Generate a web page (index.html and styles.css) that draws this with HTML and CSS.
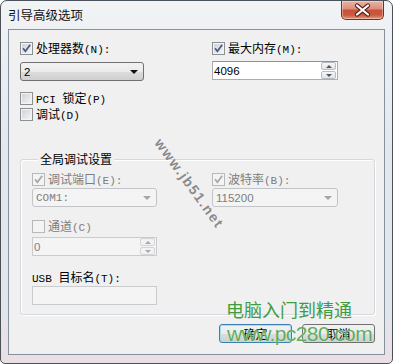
FILE: index.html
```html
<!DOCTYPE html>
<html>
<head>
<meta charset="utf-8">
<link rel="stylesheet" href="styles.css">
</head>
<body>
<div class="window">
  <div class="titlebar">
    <span class="title">引导高级选项</span>
    <div class="close">
      <svg width="41" height="18" viewBox="0 0 41 18">
        <path d="M15 4.5 L26 13.5 M26 4.5 L15 13.5" stroke="#5b1f17" stroke-width="4.2" stroke-linecap="round" fill="none"/>
        <path d="M15 4.5 L26 13.5 M26 4.5 L15 13.5" stroke="#ffffff" stroke-width="2.2" stroke-linecap="round" fill="none"/>
      </svg>
    </div>
  </div>
  <div class="client">
    <div class="top-grid">
      <div class="col">
        <label class="cb"><span class="box"><svg width="11" height="11" viewBox="0 0 11 11"><path d="M2 5.2 L4.4 8.2 L9.2 1.8" stroke="#4b5d82" stroke-width="1.8" fill="none"/></svg></span><span>处理器数<span class="l">(N):</span></span></label>
        <div class="combo combo-top"><span class="val">2</span><span class="arrow"></span></div>
        <label class="cb cb-pci"><span class="box"></span><span><span class="l">PCI </span>锁定<span class="l">(P)</span></span></label>
        <label class="cb cb-debug"><span class="box"></span><span>调试<span class="l">(D)</span></span></label>
      </div>
      <div class="col">
        <label class="cb"><span class="box"><svg width="11" height="11" viewBox="0 0 11 11"><path d="M2 5.2 L4.4 8.2 L9.2 1.8" stroke="#4b5d82" stroke-width="1.8" fill="none"/></svg></span><span>最大内存<span class="l">(M):</span></span></label>
        <div class="spin spin-top"><span class="val">4096</span><span class="spinbtns"><span class="sb"><span class="up"></span></span><span class="sb"><span class="down"></span></span></span></div>
      </div>
    </div>

    <div class="group">
      <div class="group-title">全局调试设置</div>
      <div class="ggrid">
        <div class="col">
          <label class="cb dis"><span class="box"><svg width="11" height="11" viewBox="0 0 11 11"><path d="M2 5.2 L4.4 8.2 L9.2 1.8" stroke="#a8a8a8" stroke-width="1.8" fill="none"/></svg></span><span>调试端口<span class="l">(E):</span></span></label>
          <div class="combo dcombo"><span class="val mono">COM1:</span><span class="arrow"></span></div>
          <label class="cb dis cb-chan"><span class="box"></span><span>通道<span class="l">(C)</span></span></label>
          <div class="spin dspin"><span class="val">0</span><span class="spinbtns"><span class="sb"><span class="up"></span></span><span class="sb"><span class="down"></span></span></span></div>
          <div class="lbl"><span class="l">USB </span>目标名<span class="l">(T):</span></div>
          <div class="edit"></div>
        </div>
        <div class="col">
          <label class="cb dis"><span class="box"><svg width="11" height="11" viewBox="0 0 11 11"><path d="M2 5.2 L4.4 8.2 L9.2 1.8" stroke="#a8a8a8" stroke-width="1.8" fill="none"/></svg></span><span>波特率<span class="l">(B):</span></span></label>
          <div class="combo dcombo wide"><span class="val">115200</span><span class="arrow"></span></div>
        </div>
      </div>
    </div>

    <div class="buttons">
      <div class="btn default">确定</div>
      <div class="btn">取消</div>
    </div>
  </div>

  <span class="wm-jb">www.jb51.net</span>
  <span class="wm-cn">电脑入门到精通</span>
  <span class="wm-url">www.pc280.com</span>
</div>
</body>
</html>
```
FILE: styles.css
```css
* { box-sizing: border-box; }

body {
  margin: 0;
  width: 393px;
  height: 364px;
  overflow: hidden;
  background: #ffffff;
  font-family: "Noto Sans CJK SC", sans-serif;
  font-size: 12px;
  color: #000;
}

.l {
  font-family: "Liberation Mono", monospace;
  font-size: 11px;
}

.window {
  position: relative;
  width: 393px;
  height: 364px;
  border: 1px solid #4b5158;
  border-radius: 7px 7px 5px 5px;
  background: linear-gradient(#f1f3f5 0%, #e4e8ed 40%, #e2e6eb 85%, #eadfe4 100%);
  display: flex;
  flex-direction: column;
  overflow: hidden;
}

.titlebar {
  height: 28px;
  display: flex;
  justify-content: space-between;
  align-items: flex-start;
}

.title {
  font-family: "Noto Sans CJK SC", sans-serif;
  font-size: 12.5px;
  line-height: 14px;
  margin: 7px 0 0 7px;
  color: #111;
}

.close {
  width: 43px;
  height: 19px;
  margin-right: 8px;
  border: 1px solid #7a2c22;
  border-top: none;
  border-radius: 0 0 5px 5px;
  background: linear-gradient(#eab3a5 0%, #dd8f7d 42%, #c9503a 52%, #c95a40 78%, #e29a7c 100%);
  box-shadow: inset 0 0 0 1px rgba(255, 255, 255, 0.35);
  display: flex;
  align-items: center;
  justify-content: center;
}

.client {
  margin: 0 7px;
  height: 326px;
  border: 1px solid #85919d;
  background: #f0f0f0;
  padding: 12px 9px 0 11px;
}

.top-grid {
  display: grid;
  grid-template-columns: 192px 1fr;
}

.col {
  display: flex;
  flex-direction: column;
  align-items: flex-start;
}

.cb {
  display: flex;
  align-items: center;
  gap: 3px;
  height: 13px;
  line-height: 13px;
  white-space: nowrap;
}

.box {
  width: 13px;
  height: 13px;
  flex: none;
  border: 1px solid #8e8f8f;
  background: linear-gradient(135deg, #cdd1d6 0%, #f6f7f8 100%);
  box-shadow: inset 0 0 0 1px #f4f4f4;
  display: flex;
}

.cb.dis { color: #7d7d7d; }
.cb.dis .box {
  border-color: #b8b8b8;
  background: #f4f4f4;
  box-shadow: none;
}

.cb-pci { margin-top: 11px; }
.cb-debug { margin-top: 3px; }

.combo {
  height: 19px;
  border: 1px solid #707070;
  border-radius: 3px;
  background: linear-gradient(#f2f2f2 0%, #ebebeb 50%, #dddddd 51%, #cfcfcf 100%);
  display: flex;
  align-items: center;
  justify-content: space-between;
  padding: 0 5px 0 3px;
}

.combo .val, .spin .val {
  font-family: "Liberation Sans", sans-serif;
  font-size: 11.5px;
}

.combo .val.mono {
  font-family: "Liberation Mono", monospace;
  font-size: 11px;
}

.arrow {
  width: 0;
  height: 0;
  border-left: 4px solid transparent;
  border-right: 4px solid transparent;
  border-top: 4px solid #111;
}

.combo-top {
  width: 124px;
  margin-top: 7px;
}

.spin {
  height: 19px;
  border: 1px solid #abadb3;
  border-top-color: #8f949c;
  background: #fff;
  display: flex;
  align-items: center;
  padding-left: 1px;
}

.spin .val { flex: 1; }

.spin-top {
  width: 126px;
  margin-top: 6px;
}

.spinbtns {
  width: 16px;
  height: 17px;
  display: flex;
  flex-direction: column;
  gap: 1px;
  padding: 0 1px 0 0;
}

.sb {
  flex: 1;
  border: 1px solid #b6bcc4;
  border-radius: 2px;
  background: linear-gradient(#f6f6f6, #e2e4e7);
  display: flex;
  align-items: center;
  justify-content: center;
}

.up {
  width: 0; height: 0;
  border-left: 3px solid transparent;
  border-right: 3px solid transparent;
  border-bottom: 3px solid #4e5660;
}

.down {
  width: 0; height: 0;
  border-left: 3px solid transparent;
  border-right: 3px solid transparent;
  border-top: 3px solid #4e5660;
}

.group {
  margin-top: 38px;
  border: 1px solid #d3d9de;
  border-radius: 3px;
  box-shadow: inset 1px 1px 0 #ffffff, 1px 1px 0 #ffffff;
  padding: 0 0 9px 11px;
}

.group-title {
  width: fit-content;
  margin: -8px 0 0 6px;
  padding: 0 2px;
  background: #f0f0f0;
  font-family: "Noto Sans CJK SC", sans-serif;
  font-size: 12px;
  line-height: 14px;
  height: 14px;
}

.ggrid {
  display: grid;
  grid-template-columns: 180px 1fr;
  margin-top: 7px;
}

.dcombo {
  width: 125px;
  margin-top: 2px;
  border-color: #c2c5c8;
  background: #f4f4f4;
  color: #7d7d7d;
}

.dcombo.wide { width: 126px; }

.dcombo .arrow { border-top-color: #a6a6a6; }

.cb-chan { margin-top: 13px; }

.dspin {
  width: 125px;
  margin-top: 4px;
  border-color: #c9cbce;
  background: #f4f4f4;
  color: #7d7d7d;
}

.dspin .sb {
  border-color: #d2d5d9;
  background: #f2f2f2;
}

.dspin .up { border-bottom-color: #a8a8a8; }
.dspin .down { border-top-color: #a8a8a8; }

.lbl {
  margin-top: 14px;
  height: 13px;
  line-height: 13px;
  white-space: nowrap;
}

.edit {
  width: 125px;
  height: 19px;
  margin-top: 3px;
  border: 1px solid #c9cbce;
  background: #f4f4f4;
}

.buttons {
  margin-top: 9px;
  display: flex;
  justify-content: flex-end;
  gap: 10px;
}

.btn {
  width: 73px;
  height: 19px;
  border: 1px solid #707070;
  border-radius: 3px;
  background: linear-gradient(#f2f2f2 0%, #ebebeb 50%, #dddddd 51%, #cfcfcf 100%);
  font-family: "Noto Sans CJK SC", sans-serif;
  font-size: 12px;
  line-height: 17px;
  text-align: center;
}

.btn.default {
  border-color: #3c7fb1;
  box-shadow: inset 0 0 0 1px #a9dcf5;
}

.wm-jb {
  position: absolute;
  left: 157px;
  top: 131px;
  transform: rotate(54deg);
  transform-origin: left center;
  font-family: "Liberation Sans", sans-serif;
  font-weight: bold;
  font-size: 14px;
  letter-spacing: 1.5px;
  color: #8a8a8a;
  text-shadow: 0 0 1px #ffffff;
  white-space: nowrap;
}

.wm-cn {
  position: absolute;
  left: 225px;
  top: 298px;
  font-family: "Noto Sans CJK SC", sans-serif;
  font-size: 18px;
  line-height: 20px;
  color: #3f9c3f;
  white-space: nowrap;
}

.wm-url {
  position: absolute;
  left: 226px;
  top: 321px;
  font-family: "Liberation Sans", sans-serif;
  font-size: 21px;
  line-height: 24px;
  letter-spacing: -0.6px;
  color: rgba(70, 160, 70, 0.85);
  text-shadow: 0 0 1px #e8f5e8;
  white-space: nowrap;
}
```
